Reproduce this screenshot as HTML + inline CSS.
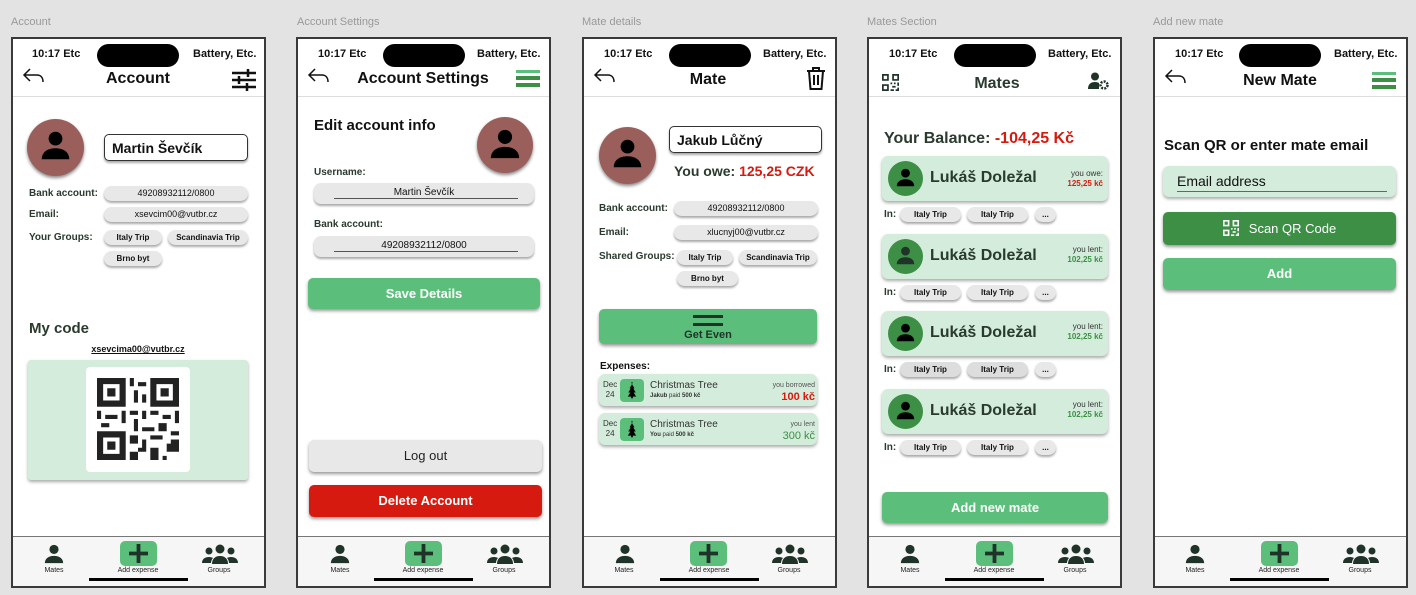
<!DOCTYPE html>
<html><head><meta charset="utf-8"><style>
*{box-sizing:border-box;margin:0;padding:0}
body{width:1416px;height:595px;background:#e3e3e3;position:relative;overflow:hidden;font-family:"Liberation Sans",Arial,sans-serif;color:#111}
.a{position:absolute}
.lbl{position:absolute;top:16px;font-size:11px;color:#999}
.ph{position:absolute;top:37px;width:255px;height:551px;border:2px solid #3a3a3a;background:#fff}
.t{font-size:11px;font-weight:bold;position:absolute;top:48px}
.pill{position:absolute;top:44px;width:82px;height:23px;border-radius:12px;background:#000}
.hl{position:absolute;top:96px;height:1px;background:#ddd}
.h{position:absolute;font-size:16px;font-weight:bold;text-align:center;width:200px}
.nav{position:absolute;top:536px;height:50px;background:#f6f6f6;border-top:1px solid #777}
.nl{position:absolute;top:567px;font-size:7px;color:#222;text-align:center;width:50px}
.plus{position:absolute;top:541px;width:37px;height:25px;border-radius:5px;background:#5bbf7b}
.bar{position:absolute;top:578px;width:99px;height:3px;background:#000}
.chip{position:absolute;height:15px;border-radius:8px;background:#e8e8e8;box-shadow:0 2px 2px #aaa;font-size:8px;font-weight:bold;text-align:center;line-height:15px}
.chipn{font-weight:normal;font-size:9px}
.k{position:absolute;font-size:10px;font-weight:bold;color:#2a3a2e}
.btn{position:absolute;border-radius:5px;box-shadow:0 2px 3px #999;text-align:center;color:#fff;font-weight:bold;font-size:13px}
.card{position:absolute;background:#d4ecdb;border-radius:6px;box-shadow:0 2px 3px #aaa}
.av{position:absolute;border-radius:50%;background:#9a5f5a;box-shadow:0 2px 3px #888}
</style></head><body>
<svg width="0" height="0" style="position:absolute"><defs>
<symbol id="p" viewBox="0 0 24 24"><circle cx="12" cy="7" r="5"/><path d="M2 22c0-5 4-8 10-8s10 3 10 8z"/></symbol>
<symbol id="g" viewBox="0 0 36 20"><circle cx="18" cy="5" r="4.5"/><circle cx="7" cy="7" r="3.5"/><circle cx="29" cy="7" r="3.5"/><path d="M10 20c0-5 3-8 8-8s8 3 8 8z"/><path d="M0 19c0-4 3-6 7-6 2 0 3 .5 4 1-1 1-2 3-2 5z"/><path d="M36 19c0-4-3-6-7-6-2 0-3 .5-4 1 1 1 2 3 2 5z"/></symbol>
<symbol id="back" viewBox="0 0 24 20"><path d="M8 3L2 9l6 6M2 9h13c4 0 6 3 6 7" fill="none" stroke="#111" stroke-width="1.5"/></symbol>
<symbol id="tree" viewBox="0 0 12 20"><path d="M6 0l1 2-1 0-1 0z M6 3l3 5H7.5l3 5H8l3 5H1l3-5H1.5l3-5H3z"/><rect x="5" y="17" width="2" height="3"/></symbol>
<symbol id="pl" viewBox="0 0 20 20"><path d="M8 0h4v8h8v4h-8v8H8v-8H0V8h8z"/></symbol>
<symbol id="qr" viewBox="0 0 20 20"><path d="M0 0h8v8H0zM2 2v4h4V2zM12 0h8v8h-8zm2 2v4h4V2zM0 12h8v8H0zm2 2v4h4v-4zM10 10h2v2h-2zm4 0h2v2h-2zm4 0h2v4h-2zm-6 4h4v2h-4zm-2 4h4v2h-4zm8-2h2v4h-4v-2h2z"/></symbol>
<symbol id="qr2" viewBox="0 0 20 20"><path d="M0 0h7v7H0zM1.5 1.5v4h4v-4zM2.5 2.5h2v2h-2zM13 0h7v7h-7zm1.5 1.5v4h4v-4zm1 1h2v2h-2zM0 13h7v7H0zm1.5 1.5v4h4v-4zm1 1h2v2h-2zM8 0h1v2H8zm2 1h2v1h-2zM9 3h1v3H9zm2 1h1v2h-1zM8 8h2v1H8zm3 0h1v2h-1zm2 0h2v1h-2zm3 1h2v1h-2zm3 -1h1v3h-1zM0 8h1v2H0zm2 1h3v1H2zm4-1h1v3H6zM1 11h2v1H1zm8 -1h1v3H9zm2 2h3v1h-3zm4-1h2v2h-2zm3 2h2v1h-2zM8 14h2v2H8zm3 1h1v3h-1zm2-1h3v1h-3zm4 2h3v2h-3zM13 17h2v3h-2zm-5 1h2v2H8zm8 1h1v1h-1zm2-4h2v1h-2zM10 17h1v1h-1z"/></symbol>
</defs></svg>

<div class="lbl" style="left:11px">Account</div>
<div class="lbl" style="left:297px">Account Settings</div>
<div class="lbl" style="left:582px">Mate details</div>
<div class="lbl" style="left:867px">Mates Section</div>
<div class="lbl" style="left:1153px">Add new mate</div>

<div class="ph" style="left:11px"></div>
<div class="ph" style="left:296px"></div>
<div class="ph" style="left:582px"></div>
<div class="ph" style="left:867px"></div>
<div class="ph" style="left:1153px"></div>

<!-- PHONE 1 -->
<div class="t" style="left:32px">10:17 Etc</div><div class="pill" style="left:97px"></div><div class="t" style="left:193px">Battery, Etc.</div>
<svg class="a" style="left:22px;top:66px" width="24" height="20"><use href="#back"/></svg>
<div class="h" style="left:38px;top:70px">Account</div>
<svg class="a" style="left:232px;top:69px" width="24" height="22" viewBox="0 0 24 22"><g stroke="#111" stroke-width="2.5"><path d="M0 4h24M0 11h24M0 18h24"/><path d="M16 0v8M7 7v8M15 14v8"/></g></svg>
<div class="hl" style="left:13px;width:251px"></div>
<div class="av" style="left:27px;top:119px;width:57px;height:57px"></div>
<svg class="a" style="left:39px;top:129px" width="33" height="33"><use href="#p"/></svg>
<div class="a" style="left:104px;top:134px;width:144px;height:27px;border:1px solid #333;border-radius:5px;box-shadow:0 2px 2px #aaa;font-size:14px;font-weight:bold;padding:5px 7px">Martin Ševčík</div>
<div class="k" style="left:29px;top:188px">Bank account:</div>
<div class="chip chipn" style="left:104px;top:186px;width:144px">49208932112/0800</div>
<div class="k" style="left:29px;top:209px">Email:</div>
<div class="chip chipn" style="left:104px;top:207px;width:144px">xsevcim00@vutbr.cz</div>
<div class="k" style="left:29px;top:232px">Your Groups:</div>
<div class="chip" style="left:104px;top:230px;width:58px">Italy Trip</div>
<div class="chip" style="left:168px;top:230px;width:80px">Scandinavia Trip</div>
<div class="chip" style="left:104px;top:251px;width:58px">Brno byt</div>
<div class="a" style="left:29px;top:320px;font-size:15px;font-weight:bold;color:#2a3a2e">My code</div>
<div class="a" style="left:28px;top:344px;width:220px;text-align:center;font-size:9px;font-weight:bold;text-decoration:underline">xsevcima00@vutbr.cz</div>
<div class="card" style="left:28px;top:360px;width:220px;height:120px;border-radius:3px"></div>
<div class="a" style="left:86px;top:367px;width:104px;height:105px;background:#fff;border-radius:4px"></div>
<svg class="a" style="left:97px;top:378px" width="82" height="82" fill="#222"><use href="#qr2"/></svg>
<div class="nav" style="left:13px;width:251px"></div>
<svg class="a" style="left:42px;top:543px" width="24" height="22" fill="#1f3328"><use href="#p"/></svg>
<div class="nl" style="left:29px">Mates</div>
<div class="plus" style="left:120px"></div><svg class="a" style="left:129px;top:544px" width="19" height="19" fill="#1f3328"><use href="#pl"/></svg>
<div class="nl" style="left:113px;width:50px">Add expense</div>
<svg class="a" style="left:202px;top:544px" width="36" height="20" fill="#1f3328"><use href="#g"/></svg>
<div class="nl" style="left:194px">Groups</div>
<div class="bar" style="left:89px"></div>

<!-- PHONE 2 -->
<div class="t" style="left:318px">10:17 Etc</div><div class="pill" style="left:383px"></div><div class="t" style="left:477px">Battery, Etc.</div>
<svg class="a" style="left:307px;top:66px" width="24" height="20"><use href="#back"/></svg>
<div class="h" style="left:323px;top:70px">Account Settings</div>
<svg class="a" style="left:516px;top:70px" width="24" height="17"><rect y="0" width="24" height="3" fill="#5bbf7b"/><rect y="6" width="24" height="4" fill="#3c8f45"/><rect y="13" width="24" height="4" fill="#3c8f45"/></svg>
<div class="hl" style="left:298px;width:251px"></div>
<div class="a" style="left:314px;top:117px;font-size:15px;font-weight:bold">Edit account info</div>
<div class="av" style="left:477px;top:117px;width:56px;height:56px"></div>
<svg class="a" style="left:488px;top:127px" width="34" height="34"><use href="#p"/></svg>
<div class="k" style="left:314px;top:167px">Username:</div>
<div class="chip" style="left:314px;top:183px;width:220px;height:21px;font-weight:normal;font-size:10px;line-height:19px;border-radius:7px">Martin Ševčík</div>
<div class="a" style="left:334px;top:198px;width:184px;height:1px;background:#555"></div>
<div class="k" style="left:314px;top:219px">Bank account:</div>
<div class="chip" style="left:314px;top:236px;width:220px;height:21px;font-weight:normal;font-size:10px;line-height:19px;border-radius:7px">49208932112/0800</div>
<div class="a" style="left:334px;top:251px;width:184px;height:1px;background:#555"></div>
<div class="btn" style="left:308px;top:278px;width:232px;height:31px;line-height:31px;background:#5bbf7b">Save Details</div>
<div class="btn" style="left:309px;top:440px;width:233px;height:32px;line-height:32px;background:#e8e8e8;color:#222;font-weight:normal">Log out</div>
<div class="btn" style="left:309px;top:485px;width:233px;height:32px;line-height:32px;background:#d61a0f">Delete Account</div>
<div class="nav" style="left:298px;width:251px"></div>
<svg class="a" style="left:328px;top:543px" width="24" height="22" fill="#1f3328"><use href="#p"/></svg>
<div class="nl" style="left:315px">Mates</div>
<div class="plus" style="left:405px"></div><svg class="a" style="left:414px;top:544px" width="19" height="19" fill="#1f3328"><use href="#pl"/></svg>
<div class="nl" style="left:398px">Add expense</div>
<svg class="a" style="left:487px;top:544px" width="36" height="20" fill="#1f3328"><use href="#g"/></svg>
<div class="nl" style="left:479px">Groups</div>
<div class="bar" style="left:374px"></div>

<!-- PHONE 3 -->
<div class="t" style="left:604px">10:17 Etc</div><div class="pill" style="left:669px"></div><div class="t" style="left:763px">Battery, Etc.</div>
<svg class="a" style="left:593px;top:66px" width="24" height="20"><use href="#back"/></svg>
<div class="h" style="left:608px;top:71px">Mate</div>
<svg class="a" style="left:806px;top:66px" width="20" height="25" viewBox="0 0 20 25" fill="none" stroke="#111" stroke-width="2"><path d="M1 5h18M7 5V2h6v3M3 5l1.5 18h11L17 5M8 9v10M12 9v10"/></svg>
<div class="hl" style="left:584px;width:251px"></div>
<div class="av" style="left:599px;top:127px;width:57px;height:57px"></div>
<svg class="a" style="left:611px;top:137px" width="33" height="33"><use href="#p"/></svg>
<div class="a" style="left:669px;top:126px;width:153px;height:27px;border:1px solid #333;border-radius:5px;box-shadow:0 2px 2px #aaa;font-size:14px;font-weight:bold;padding:5px 7px">Jakub Lůčný</div>
<div class="a" style="left:674px;top:163px;font-size:14px;font-weight:bold;color:#2a3a2e">You owe: <span style="color:#d61a0f">125,25 CZK</span></div>
<div class="k" style="left:599px;top:203px">Bank account:</div>
<div class="chip chipn" style="left:674px;top:201px;width:144px">49208932112/0800</div>
<div class="k" style="left:599px;top:227px">Email:</div>
<div class="chip chipn" style="left:674px;top:225px;width:144px">xlucnyj00@vutbr.cz</div>
<div class="k" style="left:599px;top:251px">Shared Groups:</div>
<div class="chip" style="left:677px;top:250px;width:56px">Italy Trip</div>
<div class="chip" style="left:739px;top:250px;width:78px">Scandinavia Trip</div>
<div class="chip" style="left:677px;top:271px;width:61px">Brno byt</div>
<div class="btn" style="left:599px;top:309px;width:218px;height:35px;background:#5bbf7b;color:#1f3328;font-size:11px"><div style="margin:6px auto 0;width:30px;height:3px;background:#1f3328"></div><div style="margin:5px auto 0;width:30px;height:3px;background:#1f3328"></div><div style="margin-top:3px">Get Even</div></div>
<div class="a" style="left:600px;top:361px;font-size:10px;font-weight:bold">Expenses:</div>
<div class="card" style="left:599px;top:374px;width:218px;height:32px"></div>
<div class="card" style="left:599px;top:413px;width:218px;height:32px"></div>
<div class="a" style="left:603px;top:380px;font-size:8px;color:#333;text-align:center;line-height:10px">Dec<br>24</div>
<div class="a" style="left:603px;top:419px;font-size:8px;color:#333;text-align:center;line-height:10px">Dec<br>24</div>
<div class="a" style="left:620px;top:379px;width:24px;height:23px;border-radius:4px;background:#5bbf7b"></div>
<div class="a" style="left:620px;top:418px;width:24px;height:23px;border-radius:4px;background:#5bbf7b"></div>
<svg class="a" style="left:627px;top:381px" width="10" height="18"><use href="#tree"/></svg>
<svg class="a" style="left:627px;top:420px" width="10" height="18"><use href="#tree"/></svg>
<div class="a" style="left:650px;top:380px;font-size:10px;color:#333">Christmas Tree</div>
<div class="a" style="left:650px;top:393px;font-size:6px;color:#333"><b>Jakub</b> paid <b>500 kč</b></div>
<div class="a" style="left:650px;top:419px;font-size:10px;color:#333">Christmas Tree</div>
<div class="a" style="left:650px;top:432px;font-size:6px;color:#333"><b>You</b> paid <b>500 kč</b></div>
<div class="a" style="left:740px;top:382px;width:75px;text-align:right;font-size:7px;color:#555">you borrowed</div>
<div class="a" style="left:740px;top:391px;width:75px;text-align:right;font-size:11px;font-weight:bold;color:#d61a0f">100 kč</div>
<div class="a" style="left:740px;top:421px;width:75px;text-align:right;font-size:7px;color:#555">you lent</div>
<div class="a" style="left:740px;top:430px;width:75px;text-align:right;font-size:11px;color:#3c8f45">300 kč</div>
<div class="nav" style="left:584px;width:251px"></div>
<svg class="a" style="left:613px;top:543px" width="24" height="22" fill="#1f3328"><use href="#p"/></svg>
<div class="nl" style="left:599px">Mates</div>
<div class="plus" style="left:690px"></div><svg class="a" style="left:699px;top:544px" width="19" height="19" fill="#1f3328"><use href="#pl"/></svg>
<div class="nl" style="left:684px">Add expense</div>
<svg class="a" style="left:772px;top:544px" width="36" height="20" fill="#1f3328"><use href="#g"/></svg>
<div class="nl" style="left:764px">Groups</div>
<div class="bar" style="left:660px"></div>

<!-- PHONE 4 -->
<div class="t" style="left:889px">10:17 Etc</div><div class="pill" style="left:954px"></div><div class="t" style="left:1048px">Battery, Etc.</div>
<svg class="a" style="left:882px;top:74px" width="17" height="17" fill="#1f3328"><use href="#qr"/></svg>
<div class="h" style="left:897px;top:75px;color:#2a3a2e">Mates</div>
<svg class="a" style="left:1088px;top:72px" width="22" height="18" viewBox="0 0 22 18" fill="#1f3328"><circle cx="7" cy="4.5" r="4"/><path d="M0 17c0-5 3-7 7-7 2 0 3 .5 4 1v6z"/><circle cx="16" cy="13" r="3.5" fill="none" stroke="#1f3328" stroke-width="2.5" stroke-dasharray="2 1.2"/></svg>
<div class="hl" style="left:869px;width:251px"></div>
<div class="a" style="left:884px;top:130px;font-size:16px;font-weight:bold;color:#2a3a2e">Your Balance: <span style="color:#d61a0f">-104,25 Kč</span></div>

<div class="card" style="left:882px;top:156px;width:226px;height:45px"></div>
<div class="a" style="left:888px;top:161px;width:35px;height:35px;border-radius:50%;background:#3c8f45"></div>
<svg class="a" style="left:895px;top:167px" width="21" height="21"><use href="#p"/></svg>
<div class="a" style="left:930px;top:169px;font-size:16px;font-weight:bold;color:#2a3a2e">Lukáš Doležal</div>
<div class="a" style="left:1040px;top:169px;width:63px;text-align:right;font-size:8px;color:#333;line-height:10px">you owe:<br><b style="color:#d61a0f">125,25 kč</b></div>
<div class="k" style="left:884px;top:209px">In:</div>
<div class="chip" style="left:900px;top:207px;width:61px">Italy Trip</div>
<div class="chip" style="left:967px;top:207px;width:61px">Italy Trip</div>
<div class="chip" style="left:1035px;top:207px;width:21px">...</div>

<div class="card" style="left:882px;top:234px;width:226px;height:45px"></div>
<div class="a" style="left:888px;top:239px;width:35px;height:35px;border-radius:50%;background:#3c8f45"></div>
<svg class="a" style="left:895px;top:245px" width="21" height="21" fill="#1f3328"><use href="#p"/></svg>
<div class="a" style="left:930px;top:247px;font-size:16px;font-weight:bold;color:#2a3a2e">Lukáš Doležal</div>
<div class="a" style="left:1040px;top:245px;width:63px;text-align:right;font-size:8px;color:#333;line-height:10px">you lent:<br><b style="color:#3c8f45">102,25 kč</b></div>
<div class="k" style="left:884px;top:287px">In:</div>
<div class="chip" style="left:900px;top:285px;width:61px">Italy Trip</div>
<div class="chip" style="left:967px;top:285px;width:61px">Italy Trip</div>
<div class="chip" style="left:1035px;top:285px;width:21px">...</div>

<div class="card" style="left:882px;top:311px;width:226px;height:45px"></div>
<div class="a" style="left:888px;top:316px;width:35px;height:35px;border-radius:50%;background:#3c8f45"></div>
<svg class="a" style="left:895px;top:322px" width="21" height="21"><use href="#p"/></svg>
<div class="a" style="left:930px;top:324px;font-size:16px;font-weight:bold;color:#2a3a2e">Lukáš Doležal</div>
<div class="a" style="left:1040px;top:322px;width:63px;text-align:right;font-size:8px;color:#333;line-height:10px">you lent:<br><b style="color:#3c8f45">102,25 kč</b></div>
<div class="k" style="left:884px;top:364px">In:</div>
<div class="chip" style="left:900px;top:362px;width:61px;background:#ddd">Italy Trip</div>
<div class="chip" style="left:967px;top:362px;width:61px;background:#ddd">Italy Trip</div>
<div class="chip" style="left:1035px;top:362px;width:21px">...</div>

<div class="card" style="left:882px;top:389px;width:226px;height:45px"></div>
<div class="a" style="left:888px;top:394px;width:35px;height:35px;border-radius:50%;background:#3c8f45"></div>
<svg class="a" style="left:895px;top:400px" width="21" height="21"><use href="#p"/></svg>
<div class="a" style="left:930px;top:402px;font-size:16px;font-weight:bold;color:#2a3a2e">Lukáš Doležal</div>
<div class="a" style="left:1040px;top:400px;width:63px;text-align:right;font-size:8px;color:#333;line-height:10px">you lent:<br><b style="color:#3c8f45">102,25 kč</b></div>
<div class="k" style="left:884px;top:442px">In:</div>
<div class="chip" style="left:900px;top:440px;width:61px">Italy Trip</div>
<div class="chip" style="left:967px;top:440px;width:61px">Italy Trip</div>
<div class="chip" style="left:1035px;top:440px;width:21px">...</div>

<div class="btn" style="left:882px;top:492px;width:226px;height:31px;line-height:31px;background:#5bbf7b">Add new mate</div>
<div class="nav" style="left:869px;width:251px"></div>
<svg class="a" style="left:898px;top:543px" width="24" height="22" fill="#1f3328"><use href="#p"/></svg>
<div class="nl" style="left:885px">Mates</div>
<div class="plus" style="left:976px"></div><svg class="a" style="left:985px;top:544px" width="19" height="19" fill="#1f3328"><use href="#pl"/></svg>
<div class="nl" style="left:969px">Add expense</div>
<svg class="a" style="left:1058px;top:544px" width="36" height="20" fill="#1f3328"><use href="#g"/></svg>
<div class="nl" style="left:1050px">Groups</div>
<div class="bar" style="left:945px"></div>

<!-- PHONE 5 -->
<div class="t" style="left:1175px">10:17 Etc</div><div class="pill" style="left:1239px"></div><div class="t" style="left:1334px">Battery, Etc.</div>
<svg class="a" style="left:1164px;top:67px" width="24" height="20"><use href="#back"/></svg>
<div class="h" style="left:1180px;top:72px">New Mate</div>
<svg class="a" style="left:1372px;top:72px" width="24" height="17"><rect y="0" width="24" height="3" fill="#5bbf7b"/><rect y="6" width="24" height="4" fill="#3c8f45"/><rect y="13" width="24" height="4" fill="#3c8f45"/></svg>
<div class="hl" style="left:1155px;width:251px"></div>
<div class="a" style="left:1164px;top:137px;font-size:15px;font-weight:bold">Scan QR or enter mate email</div>
<div class="card" style="left:1163px;top:166px;width:233px;height:31px"></div>
<div class="a" style="left:1177px;top:173px;font-size:14px;color:#111">Email address</div>
<div class="a" style="left:1177px;top:191px;width:210px;height:1px;background:#666"></div>
<div class="btn" style="left:1163px;top:212px;width:233px;height:33px;line-height:33px;background:#3c8f45;font-weight:normal"><svg width="16" height="16" fill="#fff" style="vertical-align:-3px;margin-right:10px"><use href="#qr"/></svg>Scan QR Code</div>
<div class="btn" style="left:1163px;top:258px;width:233px;height:32px;line-height:32px;background:#5bbf7b">Add</div>
<div class="nav" style="left:1155px;width:251px"></div>
<svg class="a" style="left:1183px;top:543px" width="24" height="22" fill="#1f3328"><use href="#p"/></svg>
<div class="nl" style="left:1170px">Mates</div>
<div class="plus" style="left:1261px"></div><svg class="a" style="left:1270px;top:544px" width="19" height="19" fill="#1f3328"><use href="#pl"/></svg>
<div class="nl" style="left:1254px">Add expense</div>
<svg class="a" style="left:1343px;top:544px" width="36" height="20" fill="#1f3328"><use href="#g"/></svg>
<div class="nl" style="left:1335px">Groups</div>
<div class="bar" style="left:1230px"></div>
</body></html>
